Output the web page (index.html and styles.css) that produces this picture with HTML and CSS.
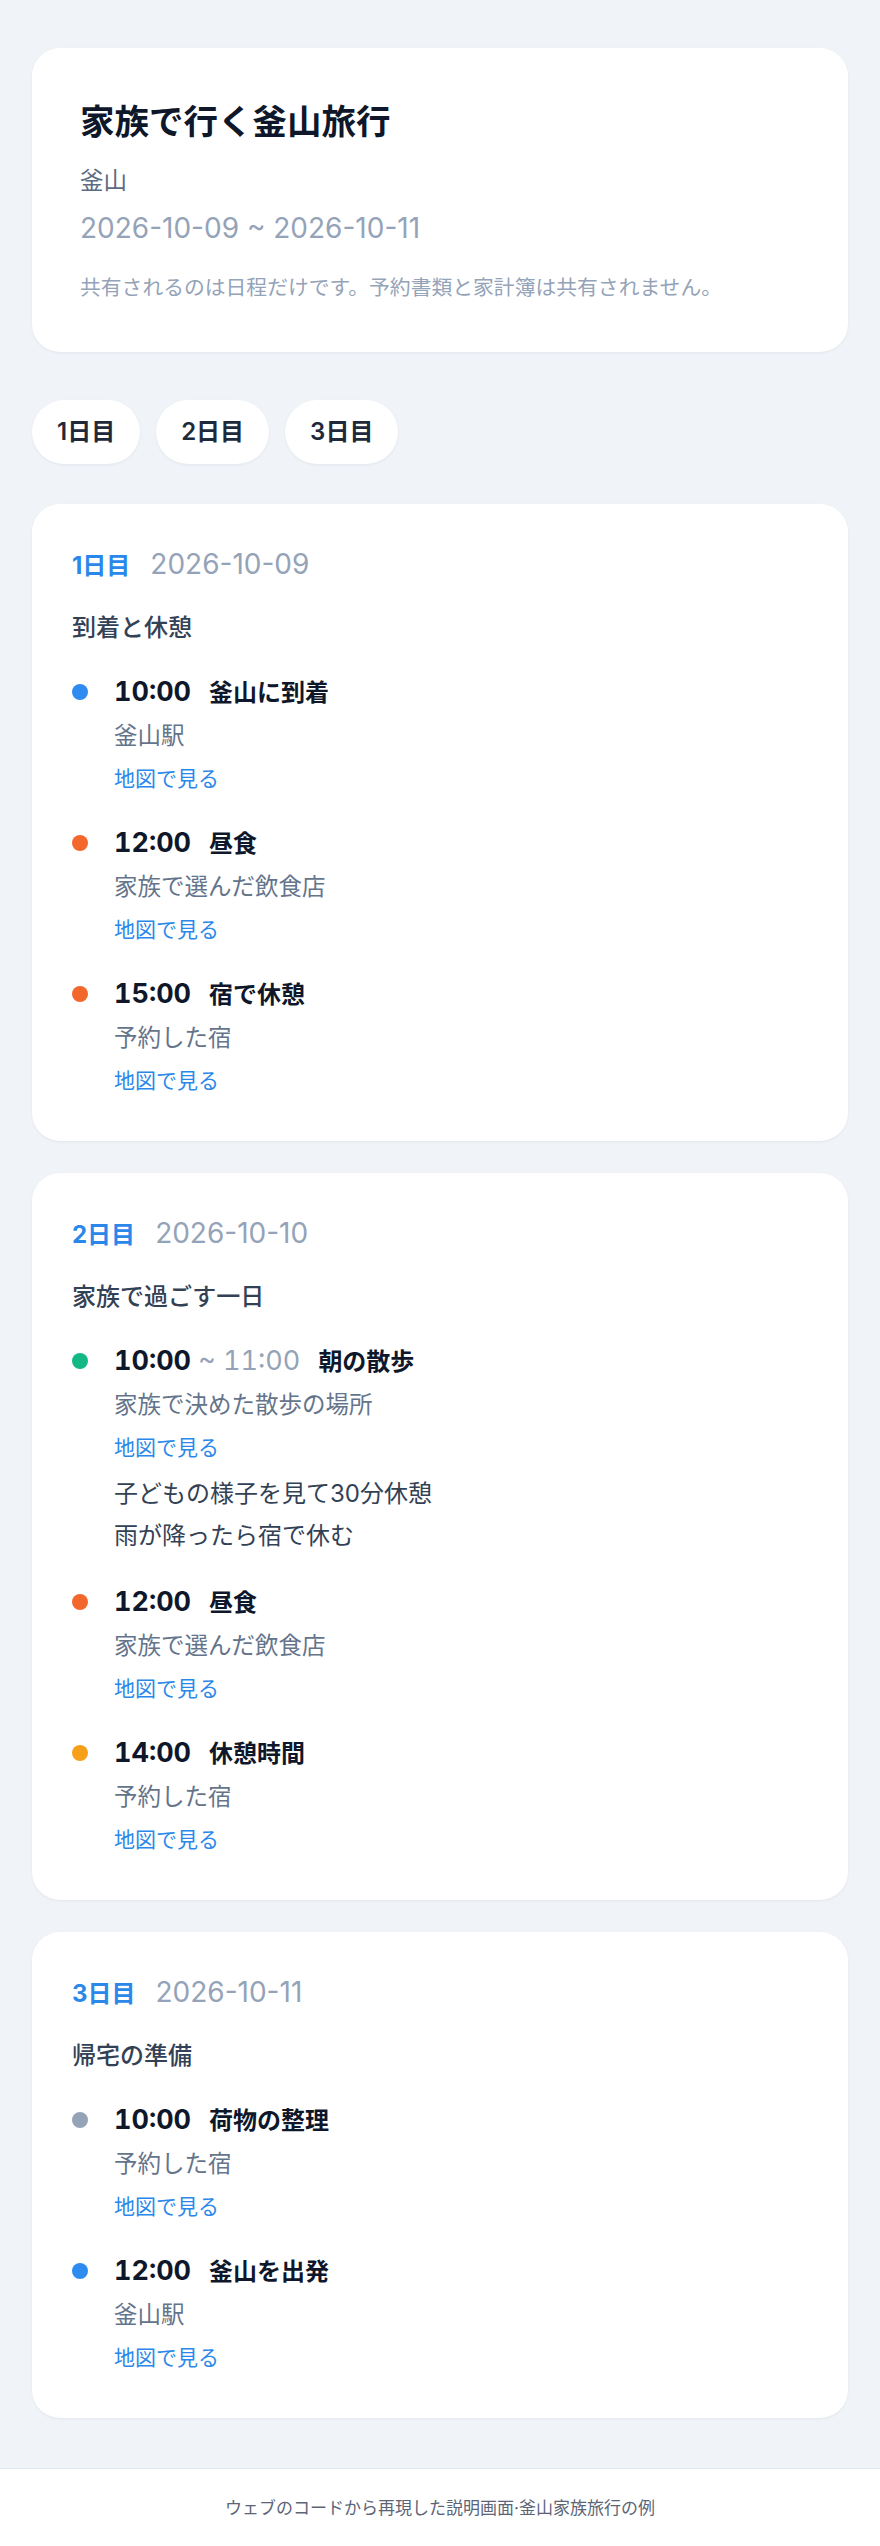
FILE: index.html
```html
<!DOCTYPE html>
<html lang="ja">
<head>
  <meta charset="UTF-8" />
  <meta name="viewport" content="width=device-width, initial-scale=1.0" />
  <title>家族で行く釜山旅行</title>
  <link rel="stylesheet" href="styles.css">
</head>
<body>
  <main class="page">
    <section class="trip-card">
      <h1 class="trip-title">家族で行く釜山旅行</h1>
      <div class="trip-place">釜山</div>
      <div class="trip-dates">2026-10-09 ~ 2026-10-11</div>
      <p class="trip-note">共有されるのは日程だけです。予約書類と家計簿は共有されません。</p>
    </section>

    <nav class="day-tabs">
      <a class="day-tab" href="#day1">1日目</a>
      <a class="day-tab" href="#day2">2日目</a>
      <a class="day-tab" href="#day3">3日目</a>
    </nav>

    <section class="day-card" id="day1">
      <div class="day-head">
        <span class="day-label">1日目</span>
        <span class="day-date">2026-10-09</span>
      </div>
      <div class="day-theme">到着と休憩</div>
      <ul class="items">
        <li class="item">
          <span class="dot dot-blue"></span>
          <div class="item-body">
            <div class="item-head"><span class="time">10:00</span><span class="item-title">釜山に到着</span></div>
            <div class="place">釜山駅</div>
            <a class="map-link" href="#">地図で見る</a>
          </div>
        </li>
        <li class="item">
          <span class="dot dot-orange"></span>
          <div class="item-body">
            <div class="item-head"><span class="time">12:00</span><span class="item-title">昼食</span></div>
            <div class="place">家族で選んだ飲食店</div>
            <a class="map-link" href="#">地図で見る</a>
          </div>
        </li>
        <li class="item">
          <span class="dot dot-orange"></span>
          <div class="item-body">
            <div class="item-head"><span class="time">15:00</span><span class="item-title">宿で休憩</span></div>
            <div class="place">予約した宿</div>
            <a class="map-link" href="#">地図で見る</a>
          </div>
        </li>
      </ul>
    </section>

    <section class="day-card" id="day2">
      <div class="day-head">
        <span class="day-label">2日目</span>
        <span class="day-date">2026-10-10</span>
      </div>
      <div class="day-theme">家族で過ごす一日</div>
      <ul class="items">
        <li class="item">
          <span class="dot dot-green"></span>
          <div class="item-body">
            <div class="item-head"><span class="time">10:00 <span class="time-end">~ 11:00</span></span><span class="item-title">朝の散歩</span></div>
            <div class="place">家族で決めた散歩の場所</div>
            <a class="map-link" href="#">地図で見る</a>
            <p class="item-memo">子どもの様子を見て30分休憩<br>雨が降ったら宿で休む</p>
          </div>
        </li>
        <li class="item">
          <span class="dot dot-orange"></span>
          <div class="item-body">
            <div class="item-head"><span class="time">12:00</span><span class="item-title">昼食</span></div>
            <div class="place">家族で選んだ飲食店</div>
            <a class="map-link" href="#">地図で見る</a>
          </div>
        </li>
        <li class="item">
          <span class="dot dot-amber"></span>
          <div class="item-body">
            <div class="item-head"><span class="time">14:00</span><span class="item-title">休憩時間</span></div>
            <div class="place">予約した宿</div>
            <a class="map-link" href="#">地図で見る</a>
          </div>
        </li>
      </ul>
    </section>

    <section class="day-card" id="day3">
      <div class="day-head">
        <span class="day-label">3日目</span>
        <span class="day-date">2026-10-11</span>
      </div>
      <div class="day-theme">帰宅の準備</div>
      <ul class="items">
        <li class="item">
          <span class="dot dot-gray"></span>
          <div class="item-body">
            <div class="item-head"><span class="time">10:00</span><span class="item-title">荷物の整理</span></div>
            <div class="place">予約した宿</div>
            <a class="map-link" href="#">地図で見る</a>
          </div>
        </li>
        <li class="item">
          <span class="dot dot-blue"></span>
          <div class="item-body">
            <div class="item-head"><span class="time">12:00</span><span class="item-title">釜山を出発</span></div>
            <div class="place">釜山駅</div>
            <a class="map-link" href="#">地図で見る</a>
          </div>
        </li>
      </ul>
    </section>
  </main>

  <footer class="footer">ウェブのコードから再現した説明画面·釜山家族旅行の例</footer>
</body>
</html>
```

FILE: styles.css
```css
body {
  margin: 0;
  background: #f0f3f8;
  color: #0f172a;
  font-family: Inter, "Noto Sans CJK JP", sans-serif;
}
.page {
  padding: 48px 32px 0;
}

/* trip summary */
.trip-card {
  background: #fff;
  border-radius: 28px;
  padding: 48px;
  box-shadow: 0 1px 3px rgba(15, 23, 42, 0.06);
}
.trip-title {
  margin: 0;
  height: 52px;
  font-size: 34.5px;
  line-height: 52px;
  font-weight: 700;
  color: #0f172a;
}
.trip-place {
  margin-top: 14px;
  font-size: 23.5px;
  line-height: 38px;
  color: #5b6b82;
}
.trip-dates {
  margin-top: 8px;
  font-size: 28px;
  line-height: 40px;
  color: #94a3b8;
}
.trip-note {
  margin: 24px 0 0;
  font-size: 20.8px;
  line-height: 32px;
  color: #94a3b8;
}

/* day tabs */
.day-tabs {
  display: flex;
  gap: 16px;
  margin-top: 48px;
}
.day-tab {
  height: 64px;
  line-height: 64px;
  padding: 0 25px;
  border-radius: 32px;
  background: #fff;
  color: #1e293b;
  font-size: 24px;
  font-weight: 600;
  text-decoration: none;
  box-shadow: 0 1px 3px rgba(15, 23, 42, 0.06);
}

/* day cards */
.day-card {
  background: #fff;
  border-radius: 28px;
  padding: 40px 40px 41px;
  margin-top: 32px;
  box-shadow: 0 1px 3px rgba(15, 23, 42, 0.06);
}
.day-tabs + .day-card {
  margin-top: 40px;
}
.day-head {
  display: flex;
  align-items: baseline;
  gap: 20px;
  height: 40px;
  line-height: 40px;
}
.day-label {
  font-size: 24px;
  font-weight: 700;
  color: #2b88ea;
}
.day-date {
  font-size: 28px;
  color: #94a3b8;
}
.day-theme {
  margin-top: 24px;
  font-size: 24px;
  line-height: 40px;
  font-weight: 500;
  color: #334155;
}
.items {
  list-style: none;
  margin: 24px 0 0;
  padding: 0;
  display: flex;
  flex-direction: column;
  gap: 25px;
}
.item {
  display: grid;
  grid-template-columns: 16px 1fr;
  column-gap: 26px;
}
.dot {
  width: 16px;
  height: 16px;
  margin-top: 12px;
  border-radius: 50%;
}
.dot-blue { background: #2e8bef; }
.dot-orange { background: #f3662c; }
.dot-green { background: #14b886; }
.dot-amber { background: #f6a01a; }
.dot-gray { background: #94a3b8; }

.item-head {
  display: flex;
  align-items: baseline;
  gap: 18px;
  height: 40px;
  line-height: 40px;
}
.time {
  font-size: 27px;
  font-weight: 700;
  font-variant-numeric: tabular-nums;
  white-space: nowrap;
  color: #0f172a;
}
.time-end {
  font-weight: 400;
  color: #94a3b8;
}
.item-title {
  font-size: 24px;
  font-weight: 600;
  color: #0f172a;
}
.place {
  margin-top: 4px;
  height: 40px;
  font-size: 23.5px;
  line-height: 40px;
  color: #64748b;
}
.map-link {
  display: block;
  margin-top: 4px;
  height: 38px;
  font-size: 21px;
  line-height: 38px;
  color: #2b88ea;
  text-decoration: none;
}
.item-memo {
  margin: 6px 0 0;
  font-size: 24px;
  line-height: 42px;
  color: #334155;
}

.footer {
  margin-top: 50px;
  border-top: 1px solid #e2e8f0;
  background: #fff;
  padding: 28px 0;
  line-height: 22px;
  text-align: center;
  font-size: 17px;
  color: #5b6577;
}
```
